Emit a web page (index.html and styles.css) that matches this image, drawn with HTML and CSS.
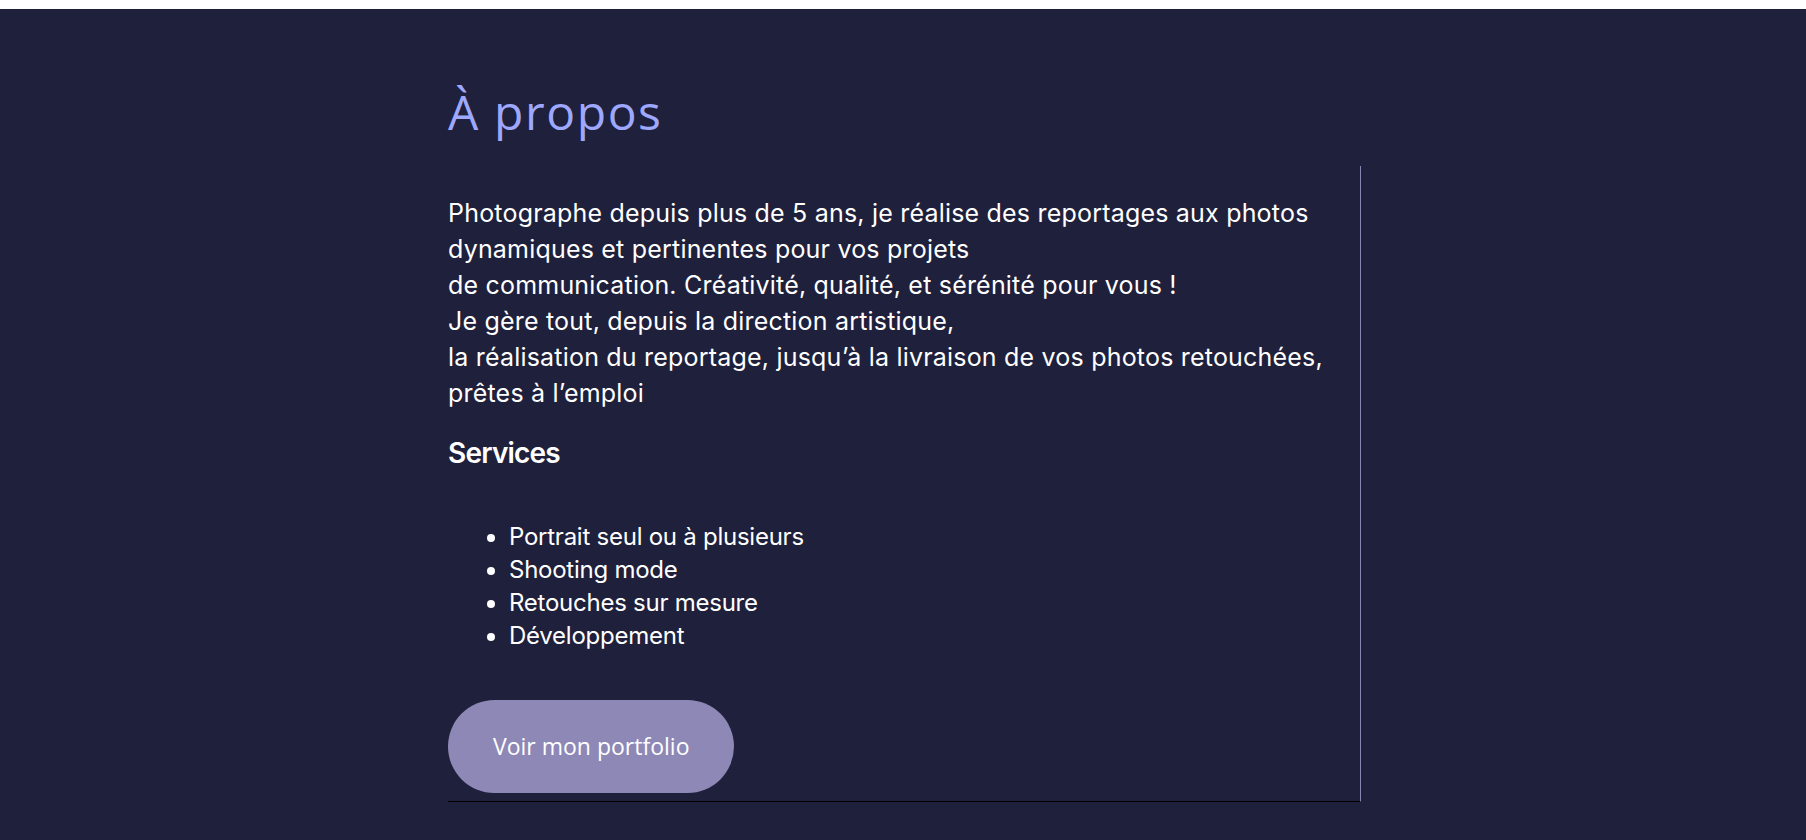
FILE: index.html
```html
<!DOCTYPE html>
<html lang="fr">
<head>
<meta charset="utf-8">
<title>À propos</title>
<link rel="stylesheet" href="styles.css">
</head>
<body>
<main class="about">
  <h1 class="about-title">À propos</h1>
  <div class="about-card">
    <p class="about-text">Photographe depuis plus de 5 ans, je réalise des reportages aux photos<br>dynamiques et pertinentes pour vos projets<br>de communication. Créativité, qualité, et sérénité pour vous !<br>Je gère tout, depuis la direction artistique,<br>la réalisation du reportage, jusqu’à la livraison de vos photos retouchées,<br>prêtes à l’emploi</p>
    <h2 class="services-title">Services</h2>
    <ul class="services-list">
      <li>Portrait seul ou à plusieurs</li>
      <li>Shooting mode</li>
      <li>Retouches sur mesure</li>
      <li>Développement</li>
    </ul>
    <a class="btn" href="#">Voir mon portfolio</a>
  </div>
</main>
</body>
</html>
```

FILE: styles.css
```css
html, body {
  margin: 0;
  padding: 0;
  background: #ffffff;
}

.about {
  margin-top: 9px;
  min-height: 831px;
  box-sizing: border-box;
  background: #1f203b;
  padding: 74px 0 0 448px;
}

.about-title {
  margin: 0 0 25px 0;
  font-family: "Open Sans", "Noto Sans", sans-serif;
  font-weight: 500;
  font-size: 48px;
  line-height: 58px;
  color: #9ea8ff;
  letter-spacing: 1.6px;
}

.about-card {
  width: 912px;
  border-right: 1px solid #8a85b5;
  border-bottom: 1px solid #000000;
  padding: 29px 0 8px 0;
  font-family: Inter, "Noto Sans", sans-serif;
  color: #ffffff;
}

.about-text {
  margin: 0;
  font-size: 25px;
  line-height: 36px;
  letter-spacing: 0.2px;
  white-space: nowrap;
}

.services-title {
  margin: 25px 0 0 0;
  font-size: 28px;
  line-height: 34px;
  font-weight: 600;
  letter-spacing: -0.8px;
}

.services-list {
  margin: 50px 0 48px 0;
  padding-left: 61px;
  font-size: 24px;
  line-height: 33px;
  letter-spacing: -0.25px;
}

.btn {
  display: block;
  width: fit-content;
  padding: 30px 45px;
  border-radius: 47px;
  background: #8e88b6;
  color: #ffffff;
  text-decoration: none;
  font-family: "Open Sans", "Noto Sans", sans-serif;
  font-size: 23px;
  line-height: 33px;
}
```
